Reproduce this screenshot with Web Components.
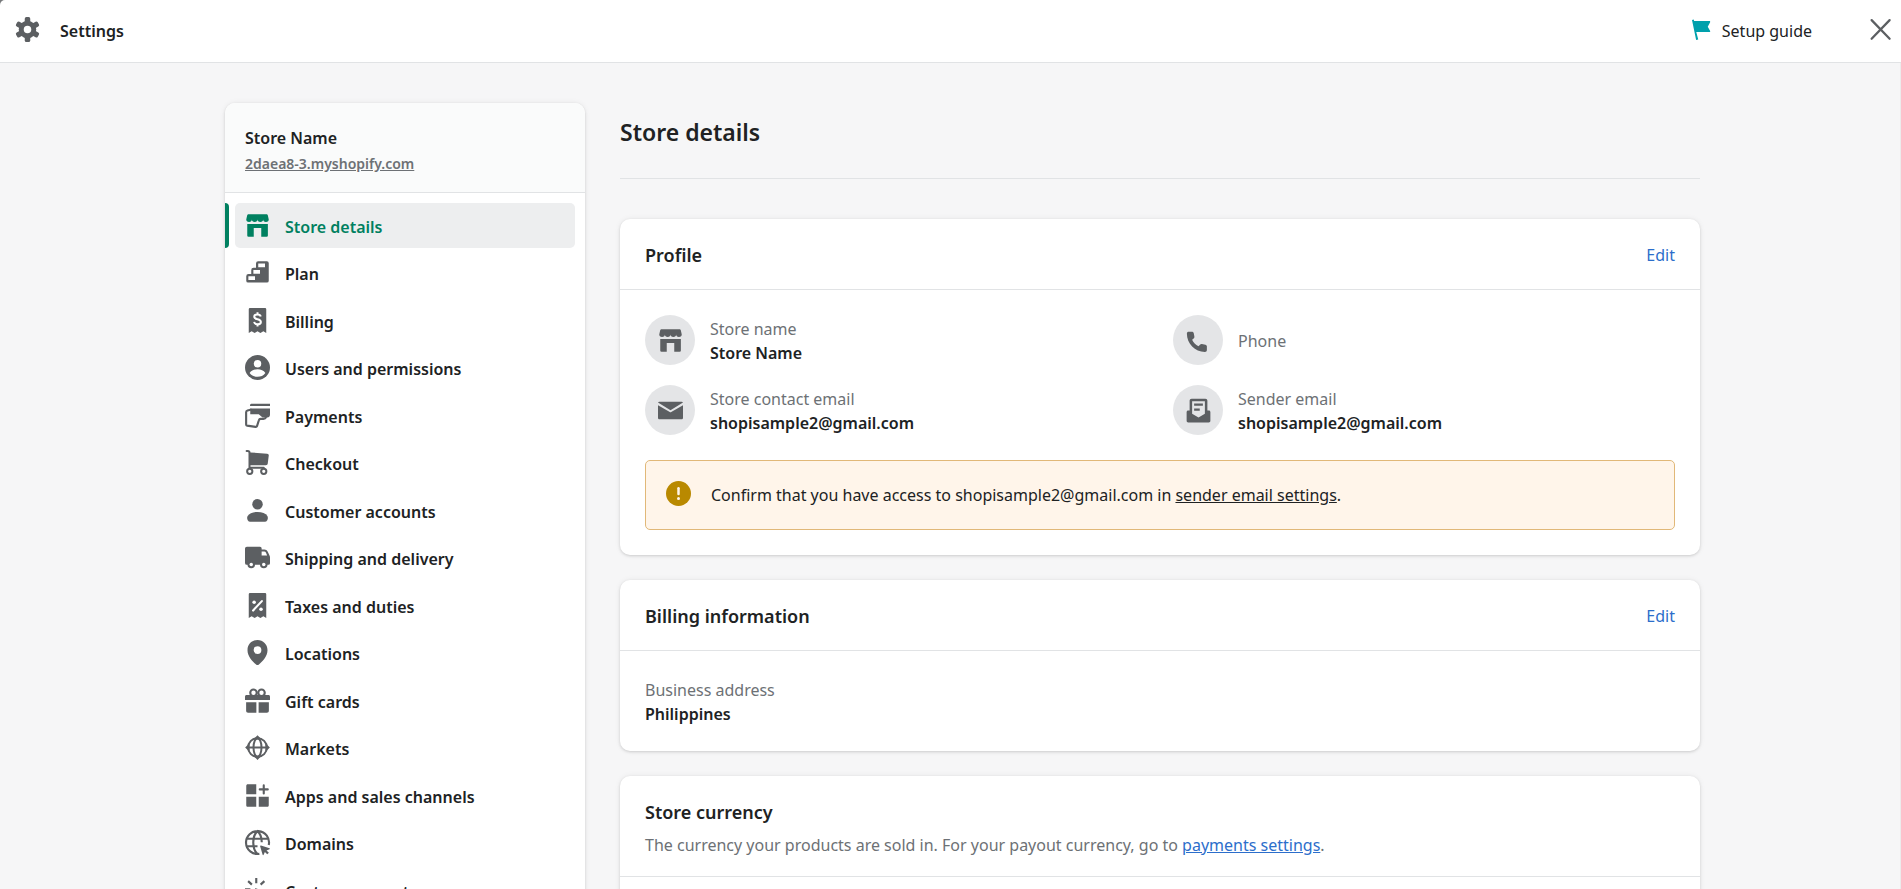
<!DOCTYPE html>
<html lang="en">
<head>
<meta charset="utf-8">
<meta name="viewport" content="width=device-width, initial-scale=1">
<title>Settings</title>
<style>
    :root {
        --text: #202223;
        --subdued: #6d7175;
        --icon: #5c5f62;
        --border: #e1e3e5;
        --link: #2c6ecb;
        --primary: #008060;
        --card-shadow: 0 0 6px rgba(23,24,24,0.06), 0 1px 3px rgba(0,0,0,0.14);
    }
    body {
        margin: 0;
        background-color: #77797b;
        color: var(--text);
        font-family: "Noto Sans", "Open Sans", sans-serif;
        font-size: 16px;
        line-height: 25px;
    }
</style>
</head>
<body>
<settings-page></settings-page>

<script>
const icons = {
    gear: `<circle cx="10" cy="10" r="7"/><rect x="7.8" y="0" width="4.4" height="20" rx="1.3"/><rect x="7.8" y="0" width="4.4" height="20" rx="1.3" transform="rotate(60 10 10)"/><rect x="7.8" y="0" width="4.4" height="20" rx="1.3" transform="rotate(120 10 10)"/><circle cx="10" cy="10" r="3" fill="#fff"/>`,
    flag: `<path fill="#00a0ac" d="M3.2 2.3l1.4-.3.3 1.2h12.3c.5 0 .7.5.5.9l-1.9 3.6 1.9 3.5c.2.4 0 .8-.5.8H6.6l1.6 5.9-1.7.4z"/>`,
    close: `<path d="M2.9 2.5l14.4 14.9M17.3 2.5L2.9 17.4" fill="none" stroke="currentColor" stroke-width="1.8" stroke-linecap="round"/>`,
    store: `<path d="M2.9 1h14.2c.6 0 1 .4 1.2.9L19 5.2a2.25 1.9 0 0 1-4.5 0 2.25 1.9 0 0 1-4.5 0 2.25 1.9 0 0 1-4.5 0 2.25 1.9 0 0 1-4.5 0l.7-3.3c.2-.5.6-.9 1.2-.9z"/><path d="M1.8 8.8h16.5V18a1 1 0 0 1-1 1H13v-7H7v7H2.8a1 1 0 0 1-1-1z"/>`,
    plan: `<path fill-rule="evenodd" d="M10.5 1H17.5A1.5 1.5 0 0 1 19 2.5V16.5A1.5 1.5 0 0 1 17.5 18H2.5A1.5 1.5 0 0 1 1 16.5V13A1.8 1.8 0 0 1 2.8 11.2H5V8A1.8 1.8 0 0 1 6.8 6.2H8.8V2.7A1.7 1.7 0 0 1 10.5 1zM10.6 2.8V5.8H16V2.8zM6.7 8V11H12V8zM2.7 13V16H8V13z"/>`,
    billing: `<path d="M4 0h12a1 1 0 0 1 1 1v19l-2.3-1.5L12.3 20 10 18.5 7.7 20l-2.4-1.5L3 20V1a1 1 0 0 1 1-1z"/><path d="M12.6 6.8c-.2-1.1-1.2-1.7-2.6-1.7-1.5 0-2.6.7-2.6 1.9 0 2.8 5.3 1.2 5.3 4.1 0 1.2-1.1 1.9-2.7 1.9-1.5 0-2.5-.7-2.7-1.9M10 3.3v2M10 12.8v2" fill="none" stroke="#fff" stroke-width="1.6"/>`,
    users: `<circle cx="10" cy="10" r="10"/><circle cx="10" cy="7" r="3" fill="#fff"/><path fill="#fff" d="M3.7 14.3C5 12.3 7.3 11.3 10 11.3s5 1 6.3 3C14.8 16.3 12.6 17.4 10 17.4s-4.8-1.1-6.3-3.1z"/>`,
    payments: `<path d="M5 .6h15v1.7H4c0-1 .4-1.7 1-1.7zM4.2 4.3H20v4.9c0 1.5-.8 2.3-2.2 2.3H14l-3-2.5H4.2z"/><path d="M5.2 5.2L2 6C1.2 6.2.9 6.6.9 7.3v9.9c0 .5.3.8.8.9l6.7 1c.6.1 1-.1 1.2-.6l1.5-4.7c.2-.7.7-1.1 1.4-1.1h2.3c1 0 1.7-.5 2.2-1.5" fill="none" stroke="currentColor" stroke-width="1.7"/>`,
    checkout: `<path d="M4 1.9l13.7 1c.9.1 1.4.7 1.3 1.5l-.8 6.4c-.1.9-.7 1.3-1.5 1.3H4z"/><path d="M1.3.8h.9c.9 0 1.4.5 1.4 1.4v12.4M3.7 14.2H15" fill="none" stroke="currentColor" stroke-width="1.6" stroke-linecap="round"/><circle cx="3.8" cy="17" r="2.1" fill="#fff" stroke="currentColor" stroke-width="1.6"/><circle cx="15" cy="17" r="2.1" fill="#fff" stroke="currentColor" stroke-width="1.6"/>`,
    customer: `<circle cx="10" cy="5" r="4.2"/><path d="M10 11.2c3.7 0 6.6 1.2 7.9 3.2.9 1.6.2 4.6-2 4.6H4.1c-2.2 0-2.9-3-2-4.6 1.3-2 4.2-3.2 7.9-3.2z"/>`,
    shipping: `<path fill-rule="evenodd" d="M1.5 1.3H12A1.3 1.3 0 0 1 13.3 2.6V3.6H15.5C16.7 3.6 17.6 4.2 18.2 5.3L19.6 8.3C19.9 8.9 20 9.4 20 10V14.5A1.3 1.3 0 0 1 18.7 15.8H1.5A1.5 1.5 0 0 1 0 14.3V2.8A1.5 1.5 0 0 1 1.5 1.3zM13.3 5.1V8.3H17.7L16.7 6C16.4 5.4 16 5.1 15.4 5.1z"/><circle cx="5" cy="15.5" r="3"/><circle cx="15" cy="15.5" r="3"/><circle cx="5" cy="15.5" r="1.4" fill="#fff"/><circle cx="15" cy="15.5" r="1.4" fill="#fff"/>`,
    taxes: `<path d="M4 0h12a1 1 0 0 1 1 1v19l-2.3-1.5L12.3 20 10 18.5 7.7 20l-2.4-1.5L3 20V1a1 1 0 0 1 1-1z"/><path d="M13.5 6.5l-7 7.5" stroke="#fff" stroke-width="1.7" stroke-linecap="round"/><circle cx="7.3" cy="7.3" r="1.4" fill="#fff"/><circle cx="12.8" cy="13" r="1.4" fill="#fff"/>`,
    location: `<path fill-rule="evenodd" d="M10 0C5.5 0 2 3.5 2 8.1c0 5 4.2 9.1 7.1 11.6.6.5 1.2.5 1.8 0C13.8 17.2 18 13.1 18 8.1 18 3.5 14.5 0 10 0zM10 4.9a3.1 3.1 0 1 1 0 6.2 3.1 3.1 0 0 1 0-6.2z"/>`,
    gift: `<path d="M1.3 5.6h17.4c.8 0 1.3.5 1.3 1.3V9.6H0V6.9c0-.8.5-1.3 1.3-1.3zM.9 11.3h8.2v8.4H2.5c-1 0-1.6-.6-1.6-1.6zM10.9 11.3h8.2v6.8c0 1-.6 1.6-1.6 1.6h-6.6z"/><circle cx="6.8" cy="3.8" r="2.6" fill="none" stroke="currentColor" stroke-width="1.7"/><circle cx="13.2" cy="3.8" r="2.6" fill="none" stroke="currentColor" stroke-width="1.7"/>`,
    markets: `<g fill="none" stroke="currentColor" stroke-width="1.6"><circle cx="10" cy="10" r="7.5"/><ellipse cx="10" cy="10" rx="3.2" ry="7.5"/><path d="M2 10h16"/></g><path d="M10 .1L13.4 3.6H6.6zM10 19.900L6.6 16.4h6.8zM.1 10L3.6 6.6v6.800zM19.9 10l-3.5 3.400V6.600z"/>`,
    apps: `<path d="M2.3 1H9v8H1V2.3C1 1.5 1.5 1 2.3 1zM1 11h8v8H2.3C1.5 19 1 18.5 1 17.7zM11 11h8v6.7c0 .8-.5 1.3-1.3 1.3H11z"/><path d="M15 1.9v6.4M11.8 5.1h6.4" stroke="currentColor" stroke-width="1.7" stroke-linecap="round"/>`,
    domains: `<g fill="none" stroke="currentColor" stroke-width="1.7"><path d="M19 12A9.2 9.2 0 1 0 11.5 19.1M10 19.2C7.8 17.2 6.6 13.8 6.6 10S7.8 2.8 10 .9C12.2 2.8 13.4 6 13.4 9.8M1.3 7h17.4M1.3 13H10"/></g><path d="M12.8 12.3l6.8 2.2c.4.2.4.6 0 .8l-2.4 1 1.9 1.9-1.3 1.3-1.9-1.900-1 2.200c-.2.400-.6.400-.8 0l-2-6.800c-.1-.400.2-.600.7-.500z"/>`,
    events: `<g fill="none" stroke="currentColor" stroke-width="1.7"><path d="M9 0v4.2M2.5 2.5l3 2.8M15.5 2.5l-3 2.8M0 9h4.3M2.8 15.5l2.7-2.7"/></g><path d="M8 8l11.5 4-5 2.5L12 19.5z"/>`,
    mail: `<path d="M0 3.6C.2 3.2.6 3 1.1 3h17.8c.5 0 .9.2 1.1.6L10 9.7zM0 5.8l9.4 5.4c.4.2.8.2 1.2 0L20 5.8v9.9c0 .8-.5 1.3-1.3 1.3H1.3C.5 17 0 16.5 0 15.7z"/>`,
    phone: `<path d="M.7 4.6C.7 3.5 1.3 3 2.2 3h2.5c.8 0 1.3.4 1.5 1.2l.5 2.5c.1.7-.1 1.2-.6 1.6L4.9 9.4c1 2.3 2.7 4.1 5.1 5.2l1.2-1.2c.4-.5.9-.7 1.5-.6l2.8.5c.8.2 1.2.7 1.2 1.4v2.8c0 1-.6 1.6-1.6 1.6C7.2 19.1.7 12.5.7 4.6z"/>`,
    sender: `<path fill-rule="evenodd" d="M4.5.5h11c1 0 1.6.6 1.6 1.6V10h1.2c.7 0 1.2.5 1.2 1.2v7c0 .8-.5 1.3-1.3 1.3H1.8c-.8 0-1.3-.5-1.3-1.3v-7C.5 10.500 1 10 1.7 10h1.2V2.1C2.9 1.1 3.5.5 4.5.5zM4.9 2.5v10L10 15.5l5.1-3v-10z"/><path d="M6.5 5.2h7M6.5 9.2h4.5" stroke="currentColor" stroke-width="1.8"/>`,
    alert: `<circle cx="10" cy="10" r="10"/><path d="M10 5.7v4.6" stroke="#fff5ea" stroke-width="2" stroke-linecap="round"/><circle cx="10" cy="13.9" r="1.2" fill="#fff5ea"/>`
};

class uiIcon extends HTMLElement {
    constructor() {
        super();
        this.attachShadow({mode: 'open'});
    }

    connectedCallback() {
        this.shadowRoot.innerHTML = `
        <style>
            :host {
                display: block;
                flex: none;
                width: 25px;
                height: 25px;
            }
            svg {
                display: block;
                width: 100%;
                height: 100%;
                overflow: visible;
            }
        </style>
        <svg viewBox="0 0 20 20" fill="currentColor" aria-hidden="true">${icons[this.getAttribute('name')]}</svg>
        `
    }
}

class topBar extends HTMLElement {
    constructor() {
        super();
        this.attachShadow({mode: 'open'});
    }

    connectedCallback() {
        this.shadowRoot.innerHTML = `
        <style>
            :host {
                display: block;
                background-color: #fff;
                border-bottom: 1px solid var(--border);
                border-top-left-radius: 5px;
            }
            header {
                display: flex;
                align-items: center;
                padding: 15px 8px 18px 15px;
            }
            ui-icon {
                color: var(--icon);
            }
            .title {
                flex: 1;
                padding: 3px 0 0 20px;
                font-weight: 600;
            }
            button {
                display: flex;
                align-items: center;
                gap: 9px;
                height: 29px;
                padding: 0;
                border: 0;
                background: none;
                color: inherit;
                font: inherit;
                cursor: pointer;
            }
            button span {
                padding-top: 3px;
            }
            .guide {
                margin-right: 56px;
            }
        </style>
        <header>
            <ui-icon name="gear"></ui-icon>
            <div class="title"><slot></slot></div>
            <button class="guide" type="button"><ui-icon name="flag"></ui-icon><span>Setup guide</span></button>
            <button type="button" aria-label="Close"><ui-icon name="close"></ui-icon></button>
        </header>
        `
    }
}

class navItem extends HTMLElement {
    constructor() {
        super();
        this.attachShadow({mode: 'open'});
    }

    connectedCallback() {
        this.shadowRoot.innerHTML = `
        <style>
            :host {
                display: block;
                position: relative;
                padding: 0 10px;
            }
            a {
                display: flex;
                align-items: center;
                gap: 15px;
                height: 45px;
                padding: 0 10px;
                border-radius: 5px;
                color: var(--text);
                font-weight: 600;
                text-decoration: none;
            }
            ui-icon {
                color: var(--icon);
            }
            span {
                padding-top: 3px;
            }
            :host([selected])::before {
                content: "";
                position: absolute;
                inset: 0 auto 0 0;
                width: 4px;
                border-radius: 0 4px 4px 0;
                background-color: var(--primary);
            }
            :host([selected]) a {
                background-color: #edeeef;
            }
            :host([selected]) a, :host([selected]) ui-icon {
                color: var(--primary);
            }
        </style>
        <a href="#${this.getAttribute('icon')}"><ui-icon name="${this.getAttribute('icon')}"></ui-icon><span><slot></slot></span></a>
        `
    }
}

class settingsNav extends HTMLElement {
    constructor() {
        super();
        this.attachShadow({mode: 'open'});
    }

    connectedCallback() {
        this.shadowRoot.innerHTML = `
        <style>
            :host {
                display: block;
                overflow: hidden;
                border-radius: 10px;
                background-color: #fff;
                box-shadow: var(--card-shadow);
            }
            .store {
                display: flex;
                flex-direction: column;
                align-items: flex-start;
                padding: 23px 20px 16px;
                border-bottom: 1px solid var(--border);
                background-color: #fafbfb;
            }
            .name {
                font-weight: 600;
            }
            .store a {
                color: var(--subdued);
                font-size: 14px;
                font-weight: 600;
            }
            nav {
                display: flex;
                flex-direction: column;
                padding: 10px 0;
            }
            ::slotted(nav-item) {
                margin-bottom: 2px;
            }
            ::slotted(nav-item:nth-child(even)) {
                margin-bottom: 3px;
            }
        </style>
        <div class="store">
            <div class="name">${this.getAttribute('store')}</div>
            <a href="#store">${this.getAttribute('domain')}</a>
        </div>
        <nav><slot></slot></nav>
        `
    }
}

class settingsCard extends HTMLElement {
    constructor() {
        super();
        this.attachShadow({mode: 'open'});
    }

    connectedCallback() {
        this.shadowRoot.innerHTML = `
        <style>
            :host {
                display: block;
                border-radius: 10px;
                background-color: #fff;
                box-shadow: var(--card-shadow);
            }
            header {
                padding: 22px 25px 20px;
                border-bottom: 1px solid var(--border);
            }
            .row {
                display: flex;
                align-items: center;
                justify-content: space-between;
            }
            h2 {
                margin: 0;
                font-size: 18px;
                font-weight: 600;
                line-height: 28px;
            }
            button {
                padding: 0;
                border: 0;
                background: none;
                color: var(--link);
                font: inherit;
                cursor: pointer;
            }
            ::slotted([slot="description"]) {
                margin: 7px 0 -2px;
                color: var(--subdued);
            }
            .body {
                padding: 25px;
            }
        </style>
        <header>
            <div class="row">
                <h2>${this.getAttribute('heading')}</h2>
                ${this.hasAttribute('editable') ? '<button type="button">Edit</button>' : ''}
            </div>
            <slot name="description"></slot>
        </header>
        <div class="body"><slot></slot></div>
        `
    }
}

class detailItem extends HTMLElement {
    constructor() {
        super();
        this.attachShadow({mode: 'open'});
    }

    connectedCallback() {
        const icon = this.getAttribute('icon');
        this.shadowRoot.innerHTML = `
        <style>
            :host {
                display: flex;
                align-items: center;
                gap: 15px;
            }
            .avatar {
                display: grid;
                place-items: center;
                flex: none;
                width: 50px;
                height: 50px;
                border-radius: 50%;
                background-color: #e4e5e7;
                color: var(--icon);
            }
            .text {
                padding-top: 2px;
                line-height: 24px;
            }
            .label {
                color: var(--subdued);
            }
            .value {
                font-weight: 600;
            }
        </style>
        ${icon ? `<div class="avatar"><ui-icon name="${icon}"></ui-icon></div>` : ''}
        <div class="text">
            <div class="label">${this.getAttribute('label')}</div>
            <div class="value"><slot></slot></div>
        </div>
        `
    }
}

class warningBanner extends HTMLElement {
    constructor() {
        super();
        this.attachShadow({mode: 'open'});
    }

    connectedCallback() {
        this.shadowRoot.innerHTML = `
        <style>
            :host {
                display: flex;
                align-items: flex-start;
                gap: 20px;
                padding: 20px;
                border: 1px solid #e1b878;
                border-radius: 5px;
                background-color: #fff5ea;
                line-height: 28px;
            }
            ui-icon {
                color: #b98900;
            }
        </style>
        <ui-icon name="alert"></ui-icon>
        <div><slot></slot></div>
        `
    }
}

class settingsPage extends HTMLElement {
    constructor() {
        super();
        this.attachShadow({mode: 'open'});
    }

    connectedCallback() {
        this.shadowRoot.innerHTML = `
        <style>
            :host {
                display: flex;
                flex-direction: column;
                height: 100vh;
            }
            .scroll {
                flex: 1;
                min-height: 0;
                overflow-y: auto;
                scrollbar-width: none;
                border-right: 1px solid #ececec;
                background-color: #f6f6f7;
            }
            .layout {
                display: grid;
                grid-template-columns: minmax(240px, 360px) minmax(0, 1fr);
                align-items: start;
                gap: 35px;
                box-sizing: border-box;
                max-width: 1500px;
                margin: 0 auto;
                padding: 40px 0 40px 25px;
            }
            h1 {
                margin: 0 0 40px;
                padding: 14px 0 31px;
                border-bottom: 1px solid var(--border);
                font-size: 23px;
                font-weight: 600;
                line-height: 30px;
            }
            .cards {
                display: flex;
                flex-direction: column;
                gap: 25px;
            }
            .details {
                display: grid;
                grid-template-columns: 1fr 1fr;
                gap: 20px 26px;
                margin-bottom: 25px;
            }
            a {
                color: var(--link);
            }
            warning-banner a {
                color: inherit;
            }
        </style>
        <top-bar>Settings</top-bar>
        <div class="scroll">
            <div class="layout">
                <settings-nav store="Store Name" domain="2daea8-3.myshopify.com">
                    <nav-item icon="store" selected>Store details</nav-item>
                    <nav-item icon="plan">Plan</nav-item>
                    <nav-item icon="billing">Billing</nav-item>
                    <nav-item icon="users">Users and permissions</nav-item>
                    <nav-item icon="payments">Payments</nav-item>
                    <nav-item icon="checkout">Checkout</nav-item>
                    <nav-item icon="customer">Customer accounts</nav-item>
                    <nav-item icon="shipping">Shipping and delivery</nav-item>
                    <nav-item icon="taxes">Taxes and duties</nav-item>
                    <nav-item icon="location">Locations</nav-item>
                    <nav-item icon="gift">Gift cards</nav-item>
                    <nav-item icon="markets">Markets</nav-item>
                    <nav-item icon="apps">Apps and sales channels</nav-item>
                    <nav-item icon="domains">Domains</nav-item>
                    <nav-item icon="events">Customer events</nav-item>
                </settings-nav>
                <main>
                    <h1>Store details</h1>
                    <div class="cards">
                        <settings-card heading="Profile" editable>
                            <div class="details">
                                <detail-item icon="store" label="Store name">Store Name</detail-item>
                                <detail-item icon="phone" label="Phone"></detail-item>
                                <detail-item icon="mail" label="Store contact email">shopisample2@gmail.com</detail-item>
                                <detail-item icon="sender" label="Sender email">shopisample2@gmail.com</detail-item>
                            </div>
                            <warning-banner>Confirm that you have access to shopisample2@gmail.com in <a href="#sender">sender email settings</a>.</warning-banner>
                        </settings-card>
                        <settings-card heading="Billing information" editable>
                            <detail-item label="Business address">Philippines</detail-item>
                        </settings-card>
                        <settings-card heading="Store currency">
                            <p slot="description">The currency your products are sold in. For your payout currency, go to <a href="#payments">payments settings</a>.</p>
                        </settings-card>
                    </div>
                </main>
            </div>
        </div>
        `
    }
}

customElements.define('ui-icon', uiIcon);
customElements.define('top-bar', topBar);
customElements.define('nav-item', navItem);
customElements.define('settings-nav', settingsNav);
customElements.define('settings-card', settingsCard);
customElements.define('detail-item', detailItem);
customElements.define('warning-banner', warningBanner);
customElements.define('settings-page', settingsPage);
</script>
</body>
</html>
